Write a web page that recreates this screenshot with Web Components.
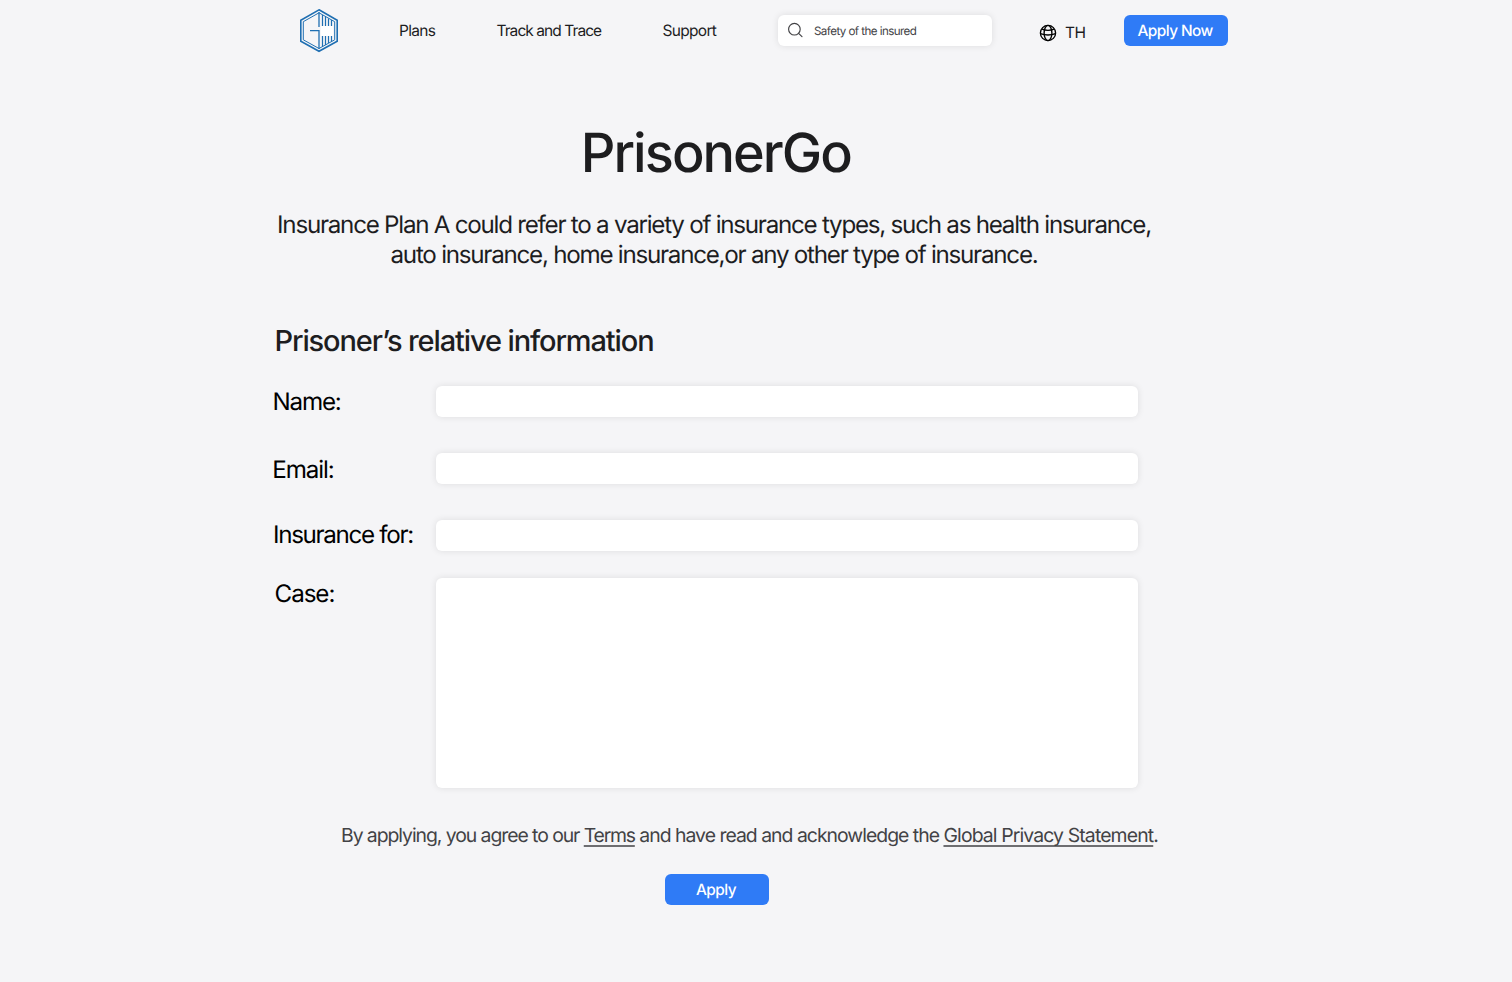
<!DOCTYPE html>
<html lang="en">
<head>
<meta charset="utf-8">
<title>PrisonerGo</title>
<style>
html,body{margin:0;height:100%;background:#f5f5f7;overflow:hidden}
body{font-family:Inter,"Liberation Sans",sans-serif;color:#1d1d1f;text-rendering:geometricPrecision}
</style>
</head>
<body>
<insurance-page></insurance-page>
<script>
const define = (name, html) => customElements.define(name, class extends HTMLElement {
  constructor() {
    super();
    const t = document.createElement('template');
    t.innerHTML = html;
    this.attachShadow({ mode: 'open' }).append(t.content.cloneNode(true));
  }
});

define('brand-logo', `
<style>:host{display:block;width:40px;height:46px}svg{display:block}</style>
<svg width="40" height="46" viewBox="299 8 40 46" fill="none" stroke="#1f6fb2">
  <path d="M319 9.8 337.2 20.2V41.2L319 51.3 300.8 41.2V20.2Z" stroke-width="1.6"/>
  <path d="M319 12.8 334.7 21.7V39.8L319 48.5 303.3 39.8V21.7Z" stroke-width="1"/>
  <path d="M319 12V27M310 30.7H319V49" stroke-width="1.3"/>
  <path d="M322.5 15V26M325.5 17V26M328.5 18.5V26M331.5 20V26M322.5 36V46.5M325.5 36V45M328.5 36V43M331.5 36V41.5" stroke-width="1.2"/>
  <path d="M321 26H333V36H321Z" fill="#fff" stroke="none"/>
</svg>`);

define('nav-link', `
<style>:host{display:block;font-size:15.5px;line-height:20px;white-space:nowrap}</style><slot></slot>`);

define('search-box', `
<style>
:host{display:flex;align-items:center;box-sizing:border-box;width:214px;height:31px;padding-left:9px;background:#fff;border-radius:6px;box-shadow:0 0 7px rgba(0,0,0,.1);color:#424245;font-size:11.6px;letter-spacing:-.57px;white-space:nowrap}
svg{flex:none;margin:-1px 11px 0 0}
</style>
<svg width="16" height="16" viewBox="0 0 16 16" fill="none" stroke="#424245" stroke-width="1.15" stroke-linecap="round"><circle cx="7.4" cy="7.2" r="5.8"/><path d="M11.6 11.4 15 14.7"/></svg>
<slot></slot>`);

define('language-switch', `
<style>:host{display:flex;align-items:center;gap:8px;font-size:15.5px;line-height:20px;letter-spacing:-.6px;white-space:nowrap}svg{flex:none}</style>
<svg width="18" height="18" viewBox="0 0 18 18" fill="none" stroke="#000" stroke-width="1.35"><circle cx="9" cy="9" r="7.6"/><ellipse cx="9" cy="9" rx="3.9" ry="7.6"/><path d="M3 5.2Q9 7.6 15 5.2M1.4 9.6Q9 12.4 16.6 9.6"/></svg>
<slot></slot>`);

define('action-button', `
<style>
:host{display:block;width:104px;height:31px}
button{display:flex;align-items:center;width:100%;height:100%;margin:0;border:0;padding:0 0 0 var(--inset,13.5px);border-radius:6px;background:#2f7bf6;color:#fff;font:500 15.4px/20px Inter,"Liberation Sans",sans-serif;white-space:nowrap;letter-spacing:-.57px;text-rendering:geometricPrecision}
</style><button type="button"><slot></slot></button>`);

define('site-header', `
<style>
:host{display:flex;height:61px;padding-left:299px}
brand-logo{margin-top:8px}
nav{display:flex}
nav-link{margin-top:21px}
.plans{margin-left:60px;width:97.5px;letter-spacing:-.68px}.track{width:166px;letter-spacing:-.93px}.support{width:115.5px;letter-spacing:-.7px}
search-box{margin-top:15px}
language-switch{margin:23px 0 0 47px;height:20px;width:85px}
action-button{margin-top:15px}
</style>
<brand-logo></brand-logo>
<nav><nav-link class="plans">Plans</nav-link><nav-link class="track">Track and Trace</nav-link><nav-link class="support">Support</nav-link></nav>
<search-box>Safety of the insured</search-box>
<language-switch>TH</language-switch>
<action-button>Apply Now</action-button>`);

define('page-hero', `
<style>
:host{display:block}
h1{margin:58px 0 0 580.8px;font-weight:500;font-size:54px;line-height:70px;letter-spacing:-1.95px;white-space:nowrap}
p{margin:21px 0 0 276px;width:876px;font-size:24.2px;line-height:30px;letter-spacing:-1.257px;text-align:center;white-space:nowrap}
</style>
<h1>PrisonerGo</h1>
<p>Insurance Plan A could refer to a variety of insurance types, such as health insurance,<br>auto insurance, home insurance,or any other type of insurance.</p>`);

define('form-field', `
<style>
:host{display:grid;grid-template-columns:163px 702px;grid-template-rows:100%;height:var(--h,31px);color:#000}
label{font-size:24.2px;line-height:31px;letter-spacing:var(--track,-1.23px);white-space:nowrap;margin-top:var(--drop,0);margin-left:var(--inset,0)}
div{background:#fff;border-radius:6px;box-shadow:0 0 7px rgba(0,0,0,.1)}
</style><label><slot></slot></label><div></div>`);

define('relative-form', `
<style>
:host{display:block;padding-left:273px}
h2{margin:51px 0 0 1.5px;font-weight:500;font-size:29px;line-height:40px;letter-spacing:-1.13px;white-space:nowrap}
.fields{display:grid;row-gap:36px;margin-top:25px}
.name{--inset:-.4px}
.email{--drop:1px;--inset:-.8px;--track:-1.08px}
.for{--drop:-1px;--track:-1.32px}
.case{--h:210px;--inset:1.6px;--track:-1.08px;margin-top:27px}
p{margin:37px 0 0 68px;font-size:19.4px;line-height:20px;color:#424245;white-space:nowrap}
.a{letter-spacing:-1.055px}.b{letter-spacing:-.985px}
u{letter-spacing:-.87px;text-decoration-color:#6e6e71;text-decoration-thickness:1.5px;text-underline-offset:3px;text-decoration-skip-ink:none}
.terms{letter-spacing:-1.22px}
action-button{margin:29px 0 0 392px}
</style>
<h2>Prisoner’s relative information</h2>
<div class="fields">
<form-field class="name">Name:</form-field>
<form-field class="email">Email:</form-field>
<form-field class="for">Insurance for:</form-field>
</div>
<form-field class="case">Case:</form-field>
<p><span class="a">By applying, you agree to our </span><u class="terms">Terms</u><span class="b"> and have read and acknowledge the </span><u>Global Privacy Statement</u>.</p>
<action-button style="--inset:31px">Apply</action-button>`);

define('insurance-page', `
<style>:host{display:block;width:1512px;height:982px;overflow:hidden}</style>
<site-header></site-header><page-hero></page-hero><relative-form></relative-form>`);
</script>
</body>
</html>
